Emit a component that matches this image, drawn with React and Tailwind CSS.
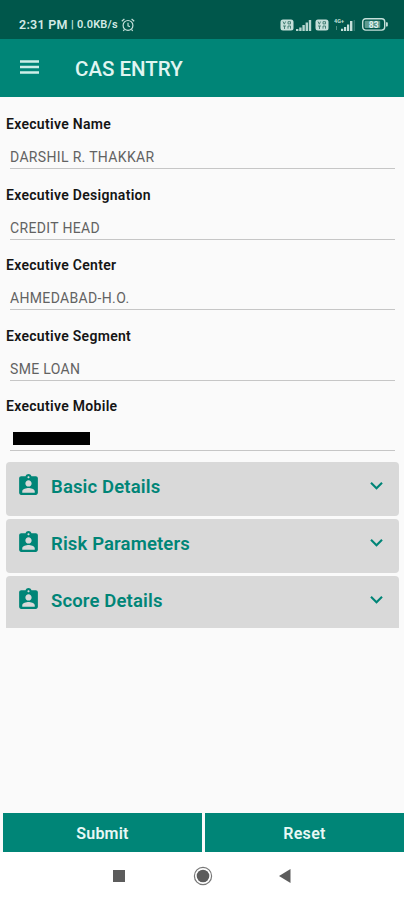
import { useState } from "react";
import { MdAssignmentInd, MdExpandMore } from "react-icons/md";

const fields = [
  { label: "Executive Name", value: "DARSHIL R. THAKKAR" },
  { label: "Executive Designation", value: "CREDIT HEAD" },
  { label: "Executive Center", value: "AHMEDABAD-H.O." },
  { label: "Executive Segment", value: "SME LOAN" },
  { label: "Executive Mobile", masked: true },
];

const sections = ["Basic Details", "Risk Parameters", "Score Details"];

const AlarmIcon = () => (
  <svg width="14" height="14" viewBox="0 0 14 14" fill="none" stroke="#c5e0da" strokeWidth="1.2">
    <circle cx="7" cy="7.4" r="4.9" />
    <path d="M7 4.8v3l2 .9M.8 3.3 3.4 1M13.2 3.3 10.6 1M3.5 11.3 2.3 13M10.5 11.3l1.2 1.7" />
  </svg>
);

const VolteIcon = () => (
  <svg width="14" height="12" viewBox="0 0 14 12" fill="none">
    <rect x="0.5" y="0.5" width="13" height="11" rx="2.5" fill="#c5e0da" />
    <path
      d="m3 2.5 1.3 2.7 1.3-2.7M8 2.7h2.5v2.2H8zM3 7h3M4.5 7v3M8 9.7V7h2.5v2.7"
      stroke="#3b786e"
      strokeWidth="0.9"
    />
  </svg>
);

const SignalIcon = () => (
  <svg width="16" height="12" viewBox="0 0 16 12" fill="#b5d6cf">
    <path d="M0 10h2.4v2H0zM3.2 8.5h2.4V12H3.2zM6.4 6h2.4v6H6.4zM9.6 3.5h2.4V12H9.6zM12.8 1h2.4v11h-2.4z" />
  </svg>
);

const DataSignalIcon = () => (
  <svg width="22" height="14" viewBox="0 0 22 14" fill="#c5e0da">
    <text x="0" y="5" fontSize="5.5" fontWeight="700" fontFamily="Roboto, sans-serif">
      4G+
    </text>
    <path d="M2 8h1v4H2z" opacity=".4" />
    <path d="M7 10.7h2.2V13H7zM10 9h2.2v4H10zM13 6.5h2.2V13H13zM16 3h2.4v10H16z" />
    <path d="M19.6 2h1.4v11h-1.4z" opacity=".25" />
  </svg>
);

const BatteryIcon = () => (
  <svg width="26" height="13" viewBox="0 0 26 13" fill="none">
    <rect x="0.7" y="0.7" width="22" height="11.4" rx="3" stroke="#c5e0da" strokeWidth="1.4" />
    <path d="M24 4.3h1a.8.8 0 0 1 .8.8v2.6a.8.8 0 0 1-.8.8h-1z" fill="#c5e0da" />
    <rect x="2.7" y="2.7" width="15.5" height="7.4" rx="1" fill="#5f9b90" />
    <text x="11.7" y="9.6" fontSize="8.5" fontWeight="700" textAnchor="middle" fill="#e0f2ee" fontFamily="Roboto, sans-serif">
      83
    </text>
  </svg>
);

const StatusBar = () => (
  <div className="flex h-[38.5px] items-start justify-between bg-[#00574b] pl-[19px] pr-[16px] pt-[17px]">
    <div className="flex items-center text-[#d3eae5]">
      <span className="w-[52px] whitespace-nowrap text-[12.5px] font-semibold leading-4 tracking-[0.25px]">
        2:31 PM
      </span>
      <span className="w-[50px] whitespace-nowrap text-[11px] font-semibold leading-4 tracking-[0.2px]">
        | 0.0KB/s
      </span>
      <AlarmIcon />
    </div>
    <div className="flex h-[15px] items-center">
      <VolteIcon />
      <div className="ml-[2px] mr-[3px]">
        <SignalIcon />
      </div>
      <VolteIcon />
      <div className="ml-[5px] mr-[6px]">
        <DataSignalIcon />
      </div>
      <BatteryIcon />
    </div>
  </div>
);

const Field = ({ label, value, masked }) => (
  <div className="h-[70.6px]">
    <p className="pl-[6px] text-[14px] font-semibold leading-4 tracking-[0.3px] text-[#151515]">{label}</p>
    <div className="ml-[10px] mr-[9px] mt-[16px] h-[21px] border-b border-[#c6c6c6]">
      {masked ? (
        <div className="pl-[3px] pt-[2px]">
          <div className="h-[13px] w-[77px] bg-black" />
        </div>
      ) : (
        <p className="text-[14px] leading-[19px] tracking-[0.34px] text-[#626262]">{value}</p>
      )}
    </div>
  </div>
);

const App = () => {
  const [openSection, setOpenSection] = useState(null);

  return (
    <div className="flex h-[900px] w-[404px] flex-col bg-[#fafafa] font-['Roboto',sans-serif]">
      <StatusBar />
      <header className="flex h-[58px] items-center bg-[#008577] pl-[20px] pt-[2px]">
        <button type="button" aria-label="Menu" className="pb-[2px]">
          <svg width="19" height="15" viewBox="0 0 19 15" fill="#cdeee8">
            <path d="M0 .2h19v2.5H0zM0 5.7h19v2.5H0zM0 11.2h19v2.5H0z" />
          </svg>
        </button>
        <h1 className="ml-[36px] pt-px text-[20.5px] font-medium text-[#e0f5f1]">CAS ENTRY</h1>
      </header>

      <main className="flex-1 pt-[19.5px]">
        {fields.map((field) => (
          <Field key={field.label} {...field} />
        ))}

        <div className="-mt-[7px] flex flex-col gap-[3px] pl-[6px] pr-[5px]">
          {sections.map((title) => (
            <button
              key={title}
              type="button"
              className="flex h-[54px] items-start rounded-[4px] bg-[#d9d9d9] pl-[10px] pr-[10px] pt-[11px] text-[#008577] last:h-[52px] last:rounded-b-none"
              onClick={() => setOpenSection(openSection === title ? null : title)}
            >
              <MdAssignmentInd size={25} />
              <span className="ml-[10px] flex-1 pt-[2px] text-left text-[18.5px] font-semibold leading-6 tracking-[0.14px]">
                {title}
              </span>
              <MdExpandMore size={25} />
            </button>
          ))}
        </div>
      </main>

      <footer>
        <div className="flex gap-[3px] pl-[3px]">
          <button
            type="button"
            className="h-[39px] w-[199px] bg-[#008577] pt-[2px] text-[16px] font-semibold tracking-[0.2px] text-[#e8f8f5]"
          >
            Submit
          </button>
          <button
            type="button"
            className="h-[39px] flex-1 bg-[#008577] pt-[2px] text-[16px] font-semibold tracking-[0.3px] text-[#e8f8f5]"
          >
            Reset
          </button>
        </div>
        <div className="flex h-[48px] items-center bg-white pl-[113px]">
          <svg width="12" height="12" viewBox="0 0 12 12" fill="#5c5c5c">
            <path d="M0 0h12v12H0z" />
          </svg>
          <svg className="ml-[68px]" width="20" height="20" viewBox="0 0 20 20">
            <circle cx="10" cy="10" r="8.6" fill="none" stroke="#777" strokeWidth="1.2" />
            <circle cx="10" cy="10" r="6.3" fill="#5c5c5c" />
          </svg>
          <svg className="ml-[66px]" width="12" height="14" viewBox="0 0 12 14" fill="#5c5c5c">
            <path d="M0 7 11.5 0v14z" />
          </svg>
        </div>
      </footer>
    </div>
  );
};

export default App;
